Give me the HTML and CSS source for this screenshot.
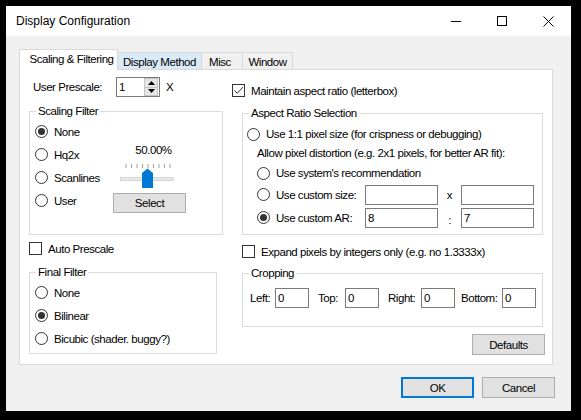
FILE: index.html
```html
<!DOCTYPE html>
<html>
<head>
<meta charset="utf-8">
<link rel="stylesheet" href="styles.css">
</head>
<body>
<div class="window">
  <div class="titlebar">
    <span class="title">Display Configuration</span>
    <div class="caption">
      <span class="cbtn"><svg width="10" height="10" viewBox="0 0 10 10"><line x1="0" y1="5.5" x2="10" y2="5.5" stroke="#000" stroke-width="1"/></svg></span>
      <span class="cbtn"><svg width="10" height="10" viewBox="0 0 10 10"><rect x="0.5" y="0.5" width="9" height="9" fill="none" stroke="#000" stroke-width="1"/></svg></span>
      <span class="cbtn"><svg width="11" height="11" viewBox="0 0 11 11"><path d="M0.5 0.5 L10.5 10.5 M10.5 0.5 L0.5 10.5" stroke="#000" stroke-width="1"/></svg></span>
    </div>
  </div>
  <div class="client">
    <div class="tabs">
      <div class="tab active">Scaling &amp; Filtering</div>
      <div class="tab hot w-dm">Display Method</div>
      <div class="tab w-misc">Misc</div>
      <div class="tab w-win">Window</div>
    </div>
    <div class="panel">
      <div class="col left">
        <div class="prescale">
          <span class="prescale-label">User Prescale:</span>
          <div class="spin">
            <span class="spin-text">1</span>
            <div class="spin-btns">
              <span class="spin-btn"><svg width="7" height="4" viewBox="0 0 7 4"><path d="M0 4 L3.5 0 L7 4 Z" fill="#000"/></svg></span>
              <span class="spin-btn"><svg width="7" height="4" viewBox="0 0 7 4"><path d="M0 0 L3.5 4 L7 0 Z" fill="#000"/></svg></span>
            </div>
          </div>
          <span class="unit">X</span>
        </div>

        <div class="group scaling">
          <span class="legend">Scaling Filter</span>
          <div class="scaling-body">
            <div class="radios">
              <div class="radio-row"><span class="radio on"></span><span>None</span></div>
              <div class="radio-row"><span class="radio"></span><span>Hq2x</span></div>
              <div class="radio-row"><span class="radio"></span><span>Scanlines</span></div>
              <div class="radio-row"><span class="radio"></span><span>User</span></div>
            </div>
            <div class="slider-col">
              <div class="pct">50.00%</div>
              <svg class="slider" width="73" height="30" viewBox="0 0 73 30">
                <g fill="#a0a0a0">
                  <rect x="12.5" y="4" width="1" height="4"/>
                  <rect x="18" y="4" width="1" height="4"/>
                  <rect x="23.5" y="4" width="1" height="4"/>
                  <rect x="29" y="4" width="1" height="4"/>
                  <rect x="34.5" y="4" width="1" height="4"/>
                  <rect x="40" y="4" width="1" height="4"/>
                  <rect x="45.5" y="4" width="1" height="4"/>
                  <rect x="51" y="4" width="1" height="4"/>
                  <rect x="56.5" y="4" width="1" height="4"/>
                </g>
                <rect x="7.5" y="17.5" width="53" height="3" fill="#e7eaea" stroke="#d6d6d6" stroke-width="1"/>
                <path d="M29 13 L34.5 8.5 L40 13 L40 28 L29 28 Z" fill="#0078d7"/>
              </svg>
              <button class="btn">Select</button>
            </div>
          </div>
        </div>

        <div class="check-row auto">
          <span class="check"></span><span>Auto Prescale</span>
        </div>

        <div class="group final">
          <span class="legend">Final Filter</span>
          <div class="radios">
            <div class="radio-row"><span class="radio"></span><span>None</span></div>
            <div class="radio-row"><span class="radio on"></span><span>Bilinear</span></div>
            <div class="radio-row"><span class="radio"></span><span>Bicubic (shader. buggy?)</span></div>
          </div>
        </div>
      </div>

      <div class="col right">
        <div class="check-row maintain">
          <span class="check"><svg width="11" height="11" viewBox="0 0 11 11"><path d="M1.5 5.5 L4.2 8.3 L9.8 2.2" fill="none" stroke="#333" stroke-width="1"/></svg></span>
          <span>Maintain aspect ratio (letterbox)</span>
        </div>

        <div class="group aspect">
          <span class="legend">Aspect Ratio Selection</span>
          <div class="radio-row r-one"><span class="radio"></span><span>Use 1:1 pixel size (for crispness or debugging)</span></div>
          <div class="note">Allow pixel distortion (e.g. 2x1 pixels, for better AR fit):</div>
          <div class="sub">
            <div class="radio-row r-sys"><span class="radio"></span><span>Use system's recommendation</span></div>
            <div class="ar-row">
              <div class="radio-row opt"><span class="radio"></span><span>Use custom size:</span></div>
              <input class="field" type="text" value="">
              <span class="sep">x</span>
              <input class="field" type="text" value="">
            </div>
            <div class="ar-row">
              <div class="radio-row opt"><span class="radio on"></span><span>Use custom AR:</span></div>
              <input class="field" type="text" value="8">
              <span class="sep colon">:</span>
              <input class="field" type="text" value="7">
            </div>
          </div>
        </div>

        <div class="check-row expand">
          <span class="check"></span><span>Expand pixels by integers only (e.g. no 1.3333x)</span>
        </div>

        <div class="group crop">
          <span class="legend">Cropping</span>
          <div class="crop-row">
            <span class="cl l-left">Left:</span><input class="field small" type="text" value="0">
            <span class="cl l-top">Top:</span><input class="field small" type="text" value="0">
            <span class="cl l-right">Right:</span><input class="field small" type="text" value="0">
            <span class="cl l-bottom">Bottom:</span><input class="field small" type="text" value="0">
          </div>
        </div>

        <div class="defaults-row"><button class="btn">Defaults</button></div>
      </div>
    </div>
    <div class="footer">
      <button class="btn ok">OK</button>
      <button class="btn">Cancel</button>
    </div>
  </div>
</div>
</body>
</html>
```

FILE: styles.css
```css
* { box-sizing: border-box; }

body {
  margin: 0;
  width: 581px;
  height: 420px;
  overflow: hidden;
  background: #000;
  font-family: "Liberation Sans", Arial, sans-serif;
  font-size: 11.5px;
  letter-spacing: -0.45px;
  color: #000;
}

.window {
  margin: 6px 0 0 6px;
  width: 565px;
  height: 405px;
  background: #f0f0f0;
  display: flex;
  flex-direction: column;
}

.titlebar {
  flex: none;
  height: 30px;
  background: #fff;
  display: flex;
  align-items: center;
}
.title {
  flex: 1;
  padding-left: 10px;
  font-size: 12px;
  letter-spacing: 0;
}
.caption { display: flex; height: 30px; }
.cbtn {
  width: 46px;
  height: 30px;
  display: flex;
  align-items: center;
  justify-content: center;
}

.client {
  flex: 1;
  padding: 13px 16px 0 13px;
  display: flex;
  flex-direction: column;
}

/* tabs */
.tabs {
  display: flex;
  align-items: flex-start;
  height: 21px;
}
.tab {
  height: 17px;
  margin-top: 3px;
  margin-left: -1px;
  border: 1px solid #d9d9d9;
  border-bottom: none;
  background: #f0f0f0;
  display: flex;
  align-items: center;
  justify-content: center;
  padding-top: 1px;
  white-space: nowrap;
}
.tab.active {
  position: relative;
  z-index: 1;
  margin-left: 0;
  margin-top: 0;
  height: 21px;
  width: 99px;
  background: #fff;
  padding: 0 0 3px 6px;
}
.tab.hot { background: #d9ebf9; }
.w-dm { width: 85px; }
.w-misc { width: 42px; padding-right: 4px; }
.w-win { width: 51px; }

.panel {
  margin-top: -1px;
  width: 534px;
  height: 296px;
  border: 1px solid #d9d9d9;
  background: #fff;
  display: grid;
  grid-template-columns: 194px 313px;
  column-gap: 9px;
  padding-left: 9px;
  align-items: start;
}

.col { display: flex; flex-direction: column; }

/* prescale */
.prescale {
  margin-top: 7px;
  height: 20px;
  display: flex;
  align-items: center;
}
.prescale-label { width: 87px; padding-left: 4px; }
.spin {
  width: 44px;
  height: 20px;
  border: 1px solid #7a7a7a;
  display: flex;
  align-items: center;
  justify-content: space-between;
  padding: 0 1px 0 2px;
}
.spin-btns {
  width: 14px;
  height: 18px;
  display: flex;
  flex-direction: column;
}
.spin-btn {
  flex: 1;
  display: flex;
  align-items: center;
  justify-content: center;
  background: #e6e6e6;
  border: 1px solid #c4c4c4;
}
.spin-btn + .spin-btn { border-top: none; }
.unit { margin-left: 6px; }

/* groups */
.group {
  position: relative;
  border: 1px solid #dcdcdc;
}
.legend {
  position: absolute;
  top: -8px;
  left: 6px;
  padding: 0 2px;
  line-height: 15px;
  background: #fff;
  white-space: nowrap;
}

.scaling {
  margin-top: 14px;
  width: 194px;
  height: 124px;
}
.scaling-body { display: flex; }
.radios { padding: 8px 0 0 5px; }
.scaling .radios { width: 83px; }

.radio-row {
  display: flex;
  align-items: center;
  gap: 6px;
  height: 23px;
  white-space: nowrap;
}
.radio {
  flex: none;
  width: 13px;
  height: 13px;
  border: 1px solid #333;
  border-radius: 50%;
  background: #fff;
  display: flex;
  align-items: center;
  justify-content: center;
}
.radio.on::after {
  content: "";
  width: 7px;
  height: 7px;
  border-radius: 50%;
  background: #333;
}

.slider-col {
  width: 73px;
  display: flex;
  flex-direction: column;
}
.pct {
  margin-top: 31px;
  line-height: 15px;
  text-align: center;
  padding-left: 8px;
}
.slider { display: block; margin-top: 2px; }

.btn {
  width: 73px;
  height: 21px;
  border: 1px solid #adadad;
  background: #e1e1e1;
  font: inherit;
  letter-spacing: inherit;
  color: #000;
  padding: 0;
}
.slider-col .btn { margin-top: 3px; height: 20px; }

.check-row {
  display: flex;
  align-items: center;
  gap: 6px;
  height: 13px;
  white-space: nowrap;
}
.check {
  flex: none;
  width: 13px;
  height: 13px;
  border: 1px solid #333;
  background: #fff;
  display: flex;
}
.auto { margin-top: 7px; }

.final {
  margin-top: 17px;
  width: 188px;
  height: 82px;
}

/* right column */
.maintain { margin-top: 14px; }

.aspect {
  margin: 16px 0 0 10px;
  width: 301px;
  height: 122px;
  padding: 10px 0 0 4px;
}
.r-one { height: 20px; }
.note {
  height: 19px;
  line-height: 19px;
  padding-left: 10px;
  white-space: nowrap;
}
.sub { padding-left: 10px; }
.r-sys { height: 20px; }
.ar-row {
  display: flex;
  align-items: center;
  height: 23px;
}
.opt { width: 108px; }
.field {
  width: 73px;
  height: 20px;
  border: 1px solid #7a7a7a;
  background: #fff;
  font: inherit;
  letter-spacing: inherit;
  color: #000;
  padding: 0 0 0 2px;
  margin: 0;
  outline: none;
}
.sep {
  width: 23px;
  text-align: center;
}
.colon { padding-top: 5px; }

.expand { margin: 10px 0 0 10px; }

.crop {
  margin: 15px 0 0 10px;
  width: 301px;
  height: 54px;
  padding: 14px 0 0 7px;
}
.crop-row {
  display: flex;
  align-items: center;
  height: 20px;
}
.field.small { width: 34px; }
.cl { white-space: nowrap; }
.l-left { width: 25px; }
.l-top { width: 27px; margin-left: 9px; }
.l-right { width: 33px; margin-left: 9px; }
.l-bottom { width: 41px; margin-left: 6px; }

.defaults-row {
  margin-top: 7px;
  display: flex;
  justify-content: flex-end;
}

/* footer */
.footer {
  margin-top: 12px;
  display: flex;
  justify-content: flex-end;
  gap: 8px;
}
.btn.ok { border: 2px solid #0078d7; }
```
